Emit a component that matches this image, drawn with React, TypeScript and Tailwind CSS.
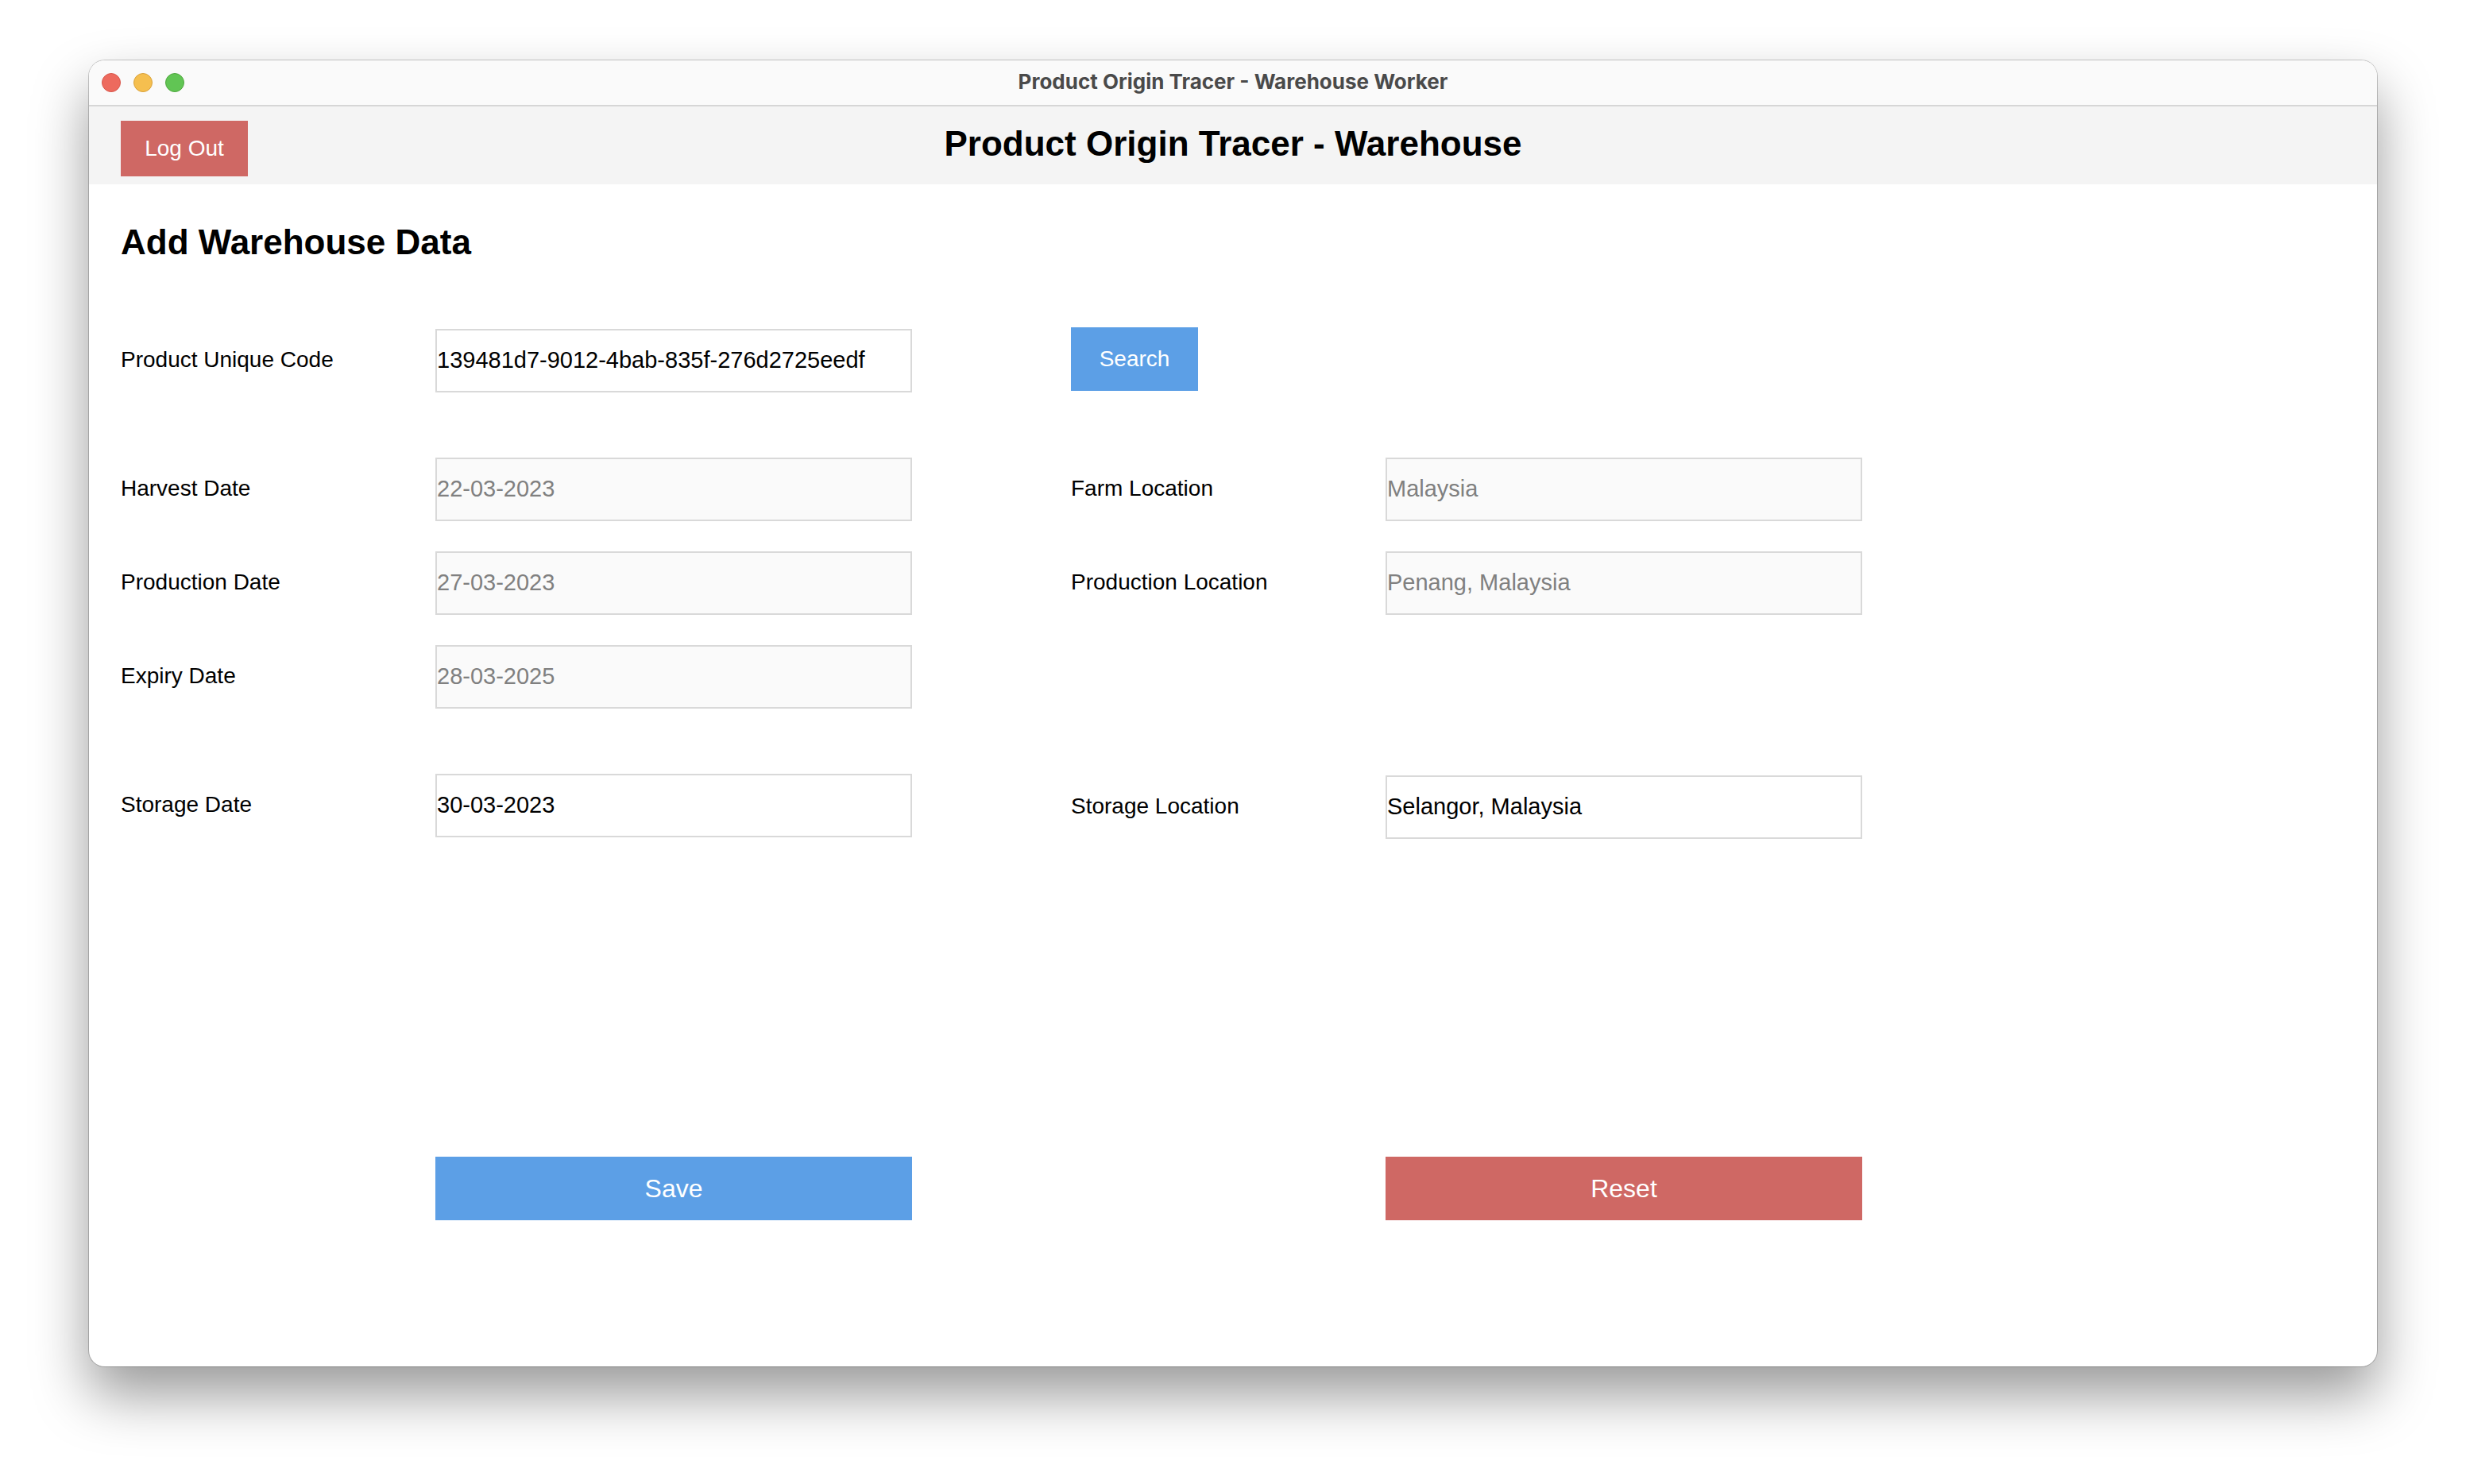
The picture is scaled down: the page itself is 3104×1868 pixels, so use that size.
import type { ReactNode } from 'react';

type FieldProps = {
  id: string;
  label: string;
  value: string;
  disabled?: boolean;
};

function Field({ id, label, value, disabled = false }: FieldProps) {
  return (
    <div className="flex h-20 items-center">
      <label htmlFor={id} className="w-[396px] shrink-0 pb-0.5 text-[28px] leading-8">
        {label}
      </label>
      <input
        id={id}
        type="text"
        defaultValue={value}
        disabled={disabled}
        className="h-20 min-w-0 flex-1 rounded-none border-2 border-[#d9d9d9] bg-white pb-0.5 text-[29px] leading-8 text-black outline-none disabled:bg-[#fafafa] disabled:text-[#808080]"
      />
    </div>
  );
}

function Column({ children }: { children: ReactNode }) {
  return <div className="flex flex-col">{children}</div>;
}

function TitleBar() {
  return (
    <div className="grid grid-cols-[1fr_auto_1fr] items-center border-b-2 border-[#d6d6d6] bg-[#fafafa] px-4">
      <div className="flex gap-4">
        <button type="button" aria-label="Close" className="size-6 rounded-full border border-[#d8574c] bg-[#ed6a5e]" />
        <button type="button" aria-label="Minimize" className="size-6 rounded-full border border-[#d8a13b] bg-[#f5bf4f]" />
        <button type="button" aria-label="Zoom" className="size-6 rounded-full border border-[#50a73f] bg-[#61c554]" />
      </div>
      <div className="pb-0.5 font-[Inter,sans-serif] text-[26px] leading-[54px] font-bold text-[#4a4a4a]">
        Product Origin Tracer - Warehouse Worker
      </div>
    </div>
  );
}

function Header() {
  return (
    <header className="grid grid-cols-[1fr_auto_1fr] items-start bg-[#f4f4f4] px-10 pt-[18px] pb-[10px]">
      <button type="button" className="h-[70px] w-40 bg-[#cf6864] text-[28px] leading-8 text-white">
        Log Out
      </button>
      <h1 className="text-[44px] leading-[58px] font-bold">Product Origin Tracer - Warehouse</h1>
    </header>
  );
}

export default function App() {
  return (
    <div className="min-h-screen bg-white px-28 pt-[76px] pb-[148px] font-['Liberation_Sans',Arial,sans-serif] text-black">
      <div className="flex min-h-[calc(100vh-224px)] flex-col overflow-hidden rounded-[20px] bg-white shadow-[0_0_0_1px_rgba(0,0,0,0.2),0_36px_70px_rgba(0,0,0,0.4)]">
        <TitleBar />
        <Header />
        <main className="px-10 pt-12">
          <h2 className="text-[44px] leading-[50px] font-bold">Add Warehouse Data</h2>
          <form
            className="mt-[82px] grid max-w-[2192px] grid-cols-2 gap-x-[200px] gap-y-[400px]"
            onSubmit={(event) => event.preventDefault()}
          >
            <Column>
              <div className="pt-0.5 pb-[82px]">
                <Field id="code" label="Product Unique Code" value="139481d7-9012-4bab-835f-276d2725eedf" />
              </div>
              <div className="flex flex-col gap-[38px] pb-[82px]">
                <Field id="harvest-date" label="Harvest Date" value="22-03-2023" disabled />
                <Field id="production-date" label="Production Date" value="27-03-2023" disabled />
                <Field id="expiry-date" label="Expiry Date" value="28-03-2025" disabled />
              </div>
              <Field id="storage-date" label="Storage Date" value="30-03-2023" />
            </Column>
            <Column>
              <div className="flex pb-[84px]">
                <button type="button" className="h-20 w-40 bg-[#5c9fe6] text-[28px] leading-8 text-white">
                  Search
                </button>
              </div>
              <div className="flex flex-col gap-[38px] pb-[202px]">
                <Field id="farm-location" label="Farm Location" value="Malaysia" disabled />
                <Field id="production-location" label="Production Location" value="Penang, Malaysia" disabled />
              </div>
              <Field id="storage-location" label="Storage Location" value="Selangor, Malaysia" />
            </Column>
            <div className="flex pl-[396px]">
              <button type="submit" className="h-20 flex-1 bg-[#5c9fe6] text-[32px] leading-9 text-white">
                Save
              </button>
            </div>
            <div className="flex pl-[396px]">
              <button type="reset" className="h-20 flex-1 bg-[#cf6864] text-[32px] leading-9 text-white">
                Reset
              </button>
            </div>
          </form>
        </main>
      </div>
    </div>
  );
}
